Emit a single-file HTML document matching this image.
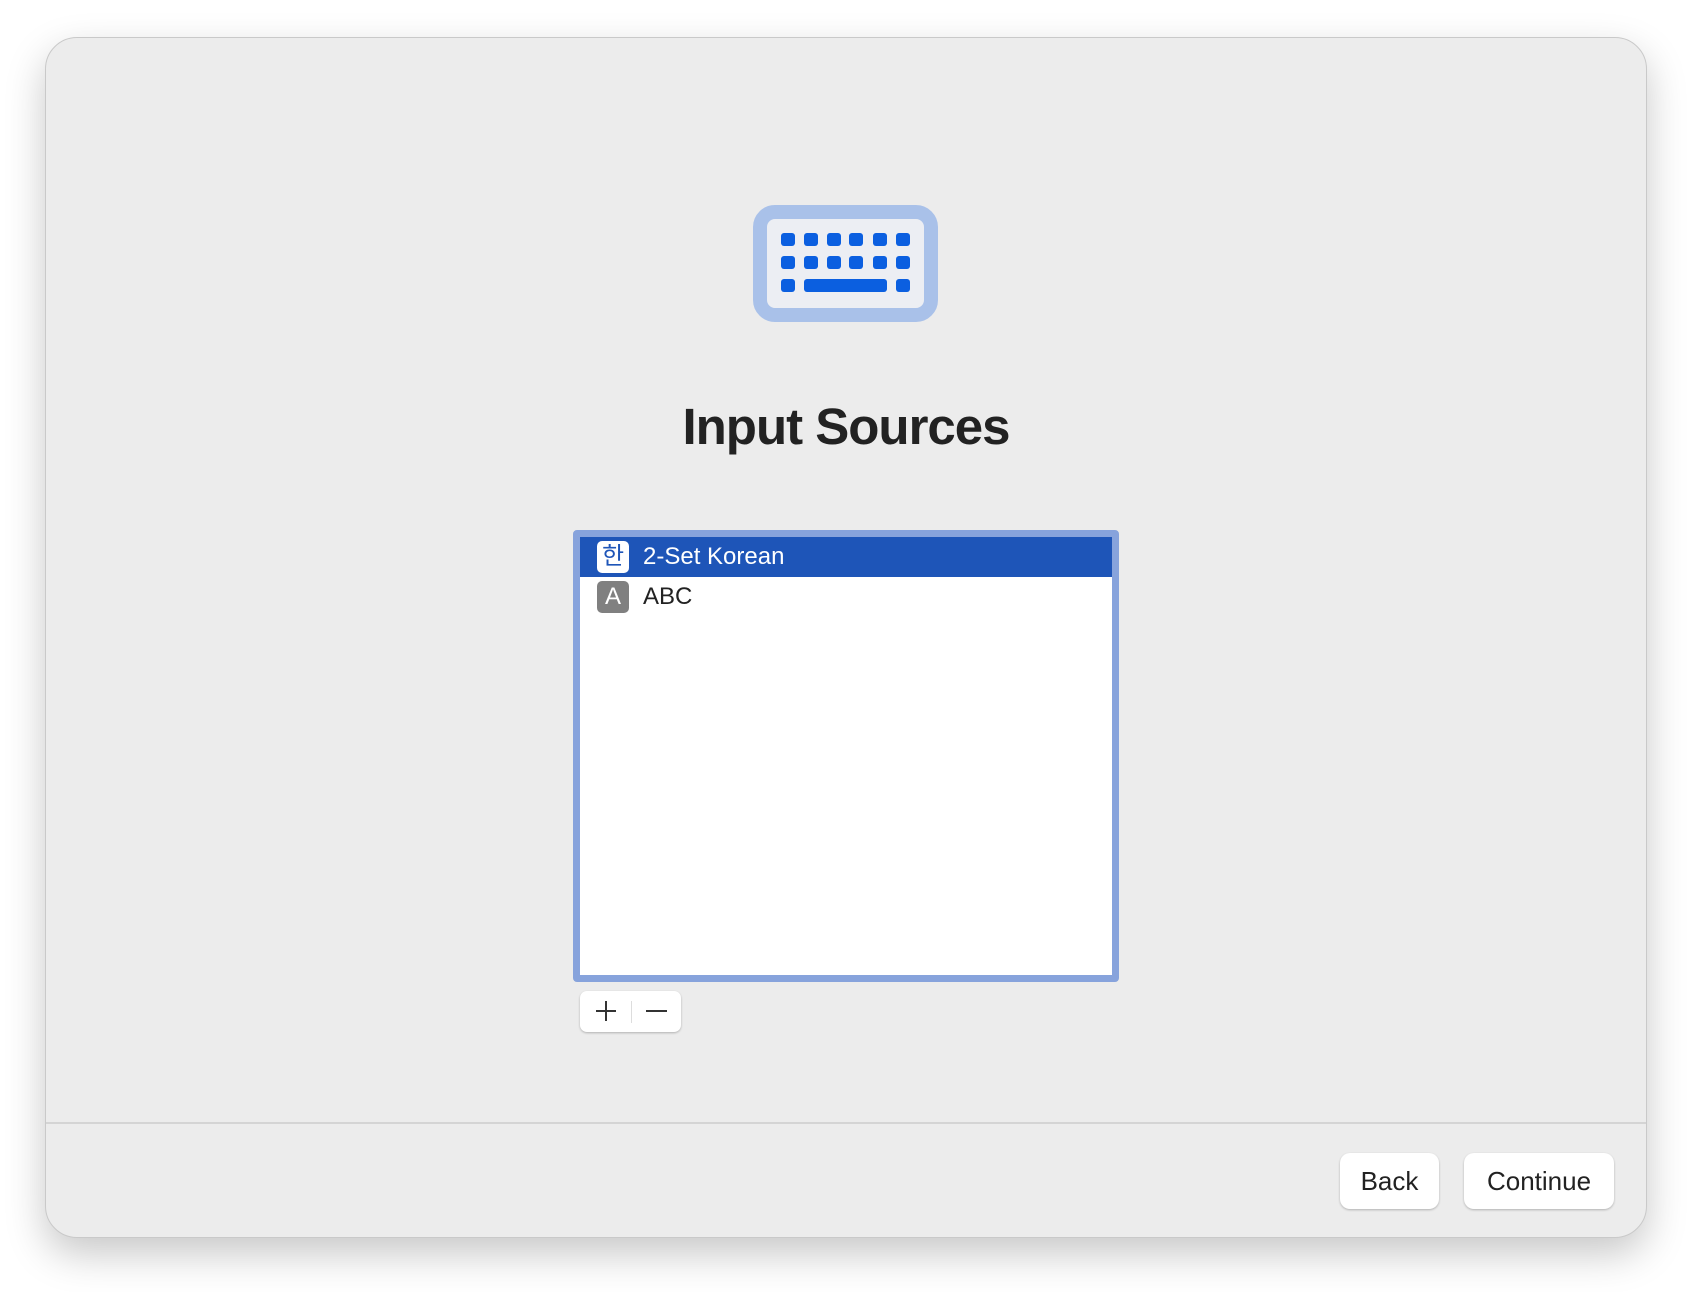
<!DOCTYPE html>
<html><head><meta charset="utf-8"><style>
body{margin:0;width:1692px;height:1292px;background:#fff;position:relative;overflow:hidden;font-family:"Liberation Sans","Noto Sans CJK KR",sans-serif;}
.win{position:absolute;left:45px;top:37px;width:1600px;height:1199px;background:#ececec;border:1px solid #c9c9c9;border-radius:32px;box-shadow:0 16px 40px rgba(0,0,0,0.22);}
.kb{position:absolute;left:753px;top:205px;width:157px;height:89px;border:14px solid #a9c1e9;border-radius:22px;background:#eceef3;}
.k{position:absolute;background:#0b5fe0;border-radius:3px;width:14px;height:13px;}
h1{position:absolute;left:0;width:1692px;top:397px;margin:0;text-align:center;font-size:51px;font-weight:bold;color:#222;letter-spacing:-1px;}
.list{position:absolute;left:573px;top:530px;width:532px;height:438px;border:7px solid #87a3dc;border-radius:4px;background:#fff;}
.sel{position:absolute;left:0;top:0;width:532px;height:40px;background:#1e55b8;}
.ic{position:absolute;width:32px;height:32px;border-radius:5px;text-align:center;line-height:32px;font-size:24px;}
.t{position:absolute;left:63px;font-size:24px;}
.pm{position:absolute;left:580px;top:991px;width:101px;height:41px;background:#fff;border-radius:7px;box-shadow:0 1px 2px rgba(0,0,0,0.25);}
.sep{position:absolute;left:46px;top:1122px;width:1600px;height:2px;background:#d4d4d4;}
.btn{position:absolute;top:1153px;height:56px;background:#fff;border-radius:10px;box-shadow:0 1px 2px rgba(0,0,0,0.25);font-size:26px;color:#222;text-align:center;line-height:56px;}
</style></head><body>
<div class="win"></div>
<div class="kb"></div>
<div class="k" style="left:781px;top:233px"></div><div class="k" style="left:804px;top:233px"></div><div class="k" style="left:827px;top:233px"></div><div class="k" style="left:849px;top:233px"></div><div class="k" style="left:873px;top:233px"></div><div class="k" style="left:896px;top:233px"></div>
<div class="k" style="left:781px;top:256px"></div><div class="k" style="left:804px;top:256px"></div><div class="k" style="left:827px;top:256px"></div><div class="k" style="left:849px;top:256px"></div><div class="k" style="left:873px;top:256px"></div><div class="k" style="left:896px;top:256px"></div>
<div class="k" style="left:781px;top:279px"></div><div class="k" style="left:804px;top:279px;width:83px"></div><div class="k" style="left:896px;top:279px"></div>
<h1>Input Sources</h1>
<div class="list">
<div class="sel"></div>
<div class="ic" style="left:17px;top:4px;background:#fff;color:#1e55b8;">한</div>
<div class="t" style="top:6px;color:#fff;">2-Set Korean</div>
<div class="ic" style="left:17px;top:44px;background:#808080;color:#fff;">A</div>
<div class="t" style="top:46px;color:#222;">ABC</div>
</div>
<div class="pm">
<div style="position:absolute;left:16px;top:19px;width:20px;height:2px;background:#333"></div>
<div style="position:absolute;left:25px;top:10px;width:2px;height:20px;background:#333"></div>
<div style="position:absolute;left:51px;top:10px;width:1px;height:22px;background:#ddd"></div>
<div style="position:absolute;left:66px;top:19px;width:21px;height:2px;background:#333"></div>
</div>
<div class="sep"></div>
<div class="btn" style="left:1340px;width:99px;">Back</div>
<div class="btn" style="left:1464px;width:150px;">Continue</div>
</body></html>
